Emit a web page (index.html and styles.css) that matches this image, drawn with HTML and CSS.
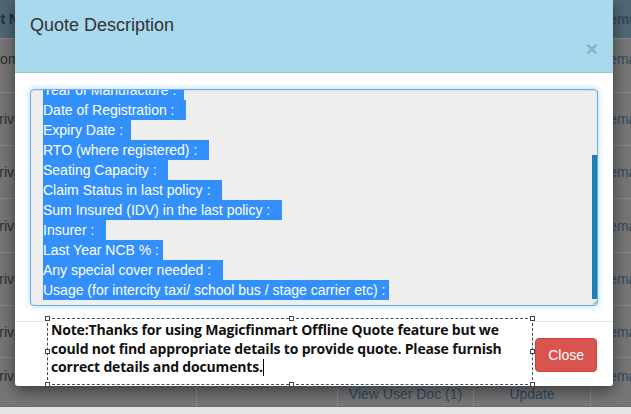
FILE: index.html
```html
<!DOCTYPE html>
<html>
<head>
<meta charset="utf-8">
<link rel="stylesheet" href="styles.css">
</head>
<body>
<div class="page">
  <div class="tbl">
    <div class="row head">
      <div class="c c1 hind">Cust Name</div><div class="c c2">Type</div><div class="c c3">Docs</div><div class="c c4">Action</div><div class="c c5">Remarks</div>
    </div>
    <div class="row r1 top">
      <div class="c c1">Comprehensive</div><div class="c c2"></div><div class="c c3"></div><div class="c c4"></div><div class="c c5">Remarks</div>
    </div>
    <div class="row r2">
      <div class="c c1">Private Car</div><div class="c c2"></div><div class="c c3"></div><div class="c c4"></div><div class="c c5">Remarks</div>
    </div>
    <div class="row r2">
      <div class="c c1">Private Car</div><div class="c c2"></div><div class="c c3"></div><div class="c c4"></div><div class="c c5">Remarks</div>
    </div>
    <div class="row r1">
      <div class="c c1">Private Car</div><div class="c c2"></div><div class="c c3"></div><div class="c c4"></div><div class="c c5">Remarks</div>
    </div>
    <div class="row r2">
      <div class="c c1">Private Car</div><div class="c c2"></div><div class="c c3"></div><div class="c c4"></div><div class="c c5">Remarks</div>
    </div>
    <div class="row r3">
      <div class="c c1">Private Car</div><div class="c c2"></div><div class="c c3"></div><div class="c c4"></div><div class="c c5">Remarks</div>
    </div>
    <div class="row last">
      <div class="c c1 lt">Private Car</div><div class="c c2"></div><div class="c c3 lb">View User Doc (1)</div><div class="c c4 lb">Update</div><div class="c c5 lt">Remarks</div>
    </div>
  </div>
  <div class="strip"></div>
</div>

<div class="modal">
  <div class="m-head">
    <div class="m-title">Quote Description</div>
    <div class="m-close-row"><span class="m-close">×</span></div>
  </div>
  <div class="m-body">
    <div class="ta">
      <div class="ta-inner">
        <div class="ln"><span>Make :  </span></div>
        <div class="ln"><span>Model :  </span></div>
        <div class="ln"><span>Year of Manufacture :  </span></div>
        <div class="ln"><span>Date of Registration :   </span></div>
        <div class="ln"><span>Expiry Date :  </span></div>
        <div class="ln"><span>RTO (where registered) :   </span></div>
        <div class="ln"><span>Seating Capacity :   </span></div>
        <div class="ln"><span>Claim Status in last policy :   </span></div>
        <div class="ln"><span>Sum Insured (IDV) in the last policy :   </span></div>
        <div class="ln"><span>Insurer :   </span></div>
        <div class="ln"><span>Last Year NCB % : </span></div>
        <div class="ln"><span>Any special cover needed :   </span></div>
        <div class="ln"><span>Usage (for intercity taxi/ school bus / stage carrier etc) : </span></div>
      </div>
      <div class="thumb"></div>
      <svg class="grip" width="5" height="5" viewBox="0 0 5 5"><path d="M4.5 1 L1 4.5 M4.5 3 L3 4.5" stroke="#777" stroke-width="0.8" fill="none"/></svg>
    </div>
  </div>
  <div class="m-foot">
    <div class="note">
      <div class="note-text">Note:Thanks for using Magicfinmart Offline Quote feature but we<br>could not find appropriate details to provide quote. Please furnish<br>correct details and documents.<span class="caret"></span></div>
      <span class="h h-tl"></span><span class="h h-tm"></span><span class="h h-tr"></span>
      <span class="h h-ml"></span><span class="h h-mr"></span>
      <span class="h h-bl"></span><span class="h h-bm"></span><span class="h h-br"></span>
    </div>
    <button class="btn-close">Close</button>
  </div>
</div>
</body>
</html>
```
FILE: styles.css
```css
html, body {
  margin: 0;
  padding: 0;
}
body {
  width: 631px;
  height: 414px;
  overflow: hidden;
  background: #767676;
  font-family: "Liberation Sans", Arial, sans-serif;
  font-size: 14px;
  position: relative;
}
.page {
  display: flex;
  flex-direction: column;
  height: 414px;
}
.tbl {
  margin-left: -18px;
  display: flex;
  flex-direction: column;
}
.row {
  display: grid;
  grid-template-columns: 215px 141px 136px 117px 200px;
  border-top: 1px solid #898989;
  color: #2e2e2e;
  align-items: center;
}
.c {
  padding: 0 8px;
  white-space: nowrap;
  overflow: hidden;
  line-height: 20px;
  height: 100%;
  display: flex;
  align-items: center;
  box-sizing: border-box;
}
.c5 { color: #33485a; }
.head {
  height: 38px;
  border-top: none;
  background: #506773;
  color: #24323b;
  font-weight: bold;
}
.hind { text-indent: -16px; }
.r1 { height: 53px; }
.r2 { height: 52px; }
.r3 { height: 51px; }
.top .c { align-items: flex-start; padding-top: 10px; }
.last { height: 48px; }
.last .c { border-right: 1px solid #898989; }
.last .lt { align-items: flex-start; padding-top: 8px; }
.last .lb {
  align-items: flex-start;
  justify-content: center;
  padding-top: 26px;
  color: #2e4a62;
}
.strip {
  flex: 1;
  background: #e6e6e6;
  border-top: 1px solid #6a6a6a;
}

/* modal */
.modal {
  position: absolute;
  left: 15px;
  top: 0;
  width: 598px;
  background: #fff;
  border-radius: 0 0 3px 3px;
  box-shadow: 0 5px 15px rgba(0,0,0,.5);
}
.m-head {
  background: #a9d9ec;
  border-bottom: 1px solid #93c6da;
  padding: 12px 15px 14px 15px;
  height: 46px;
}
.m-title {
  font-size: 18px;
  line-height: 26px;
  color: #333;
}
.m-close-row {
  display: flex;
  justify-content: flex-end;
  height: 20px;
  align-items: center;
}
.m-close {
  font-size: 21px;
  font-weight: bold;
  color: rgba(0,0,0,.2);
  line-height: 1;
  margin-right: 0;
}
.m-body {
  padding: 16px 15px 15px 15px;
}
.ta {
  position: relative;
  height: 217px;
  box-sizing: border-box;
  border: 1px solid #66afe9;
  border-radius: 4px;
  background: #eee;
  box-shadow: inset 0 1px 1px rgba(0,0,0,.075), 0 0 6px rgba(102,175,233,.5);
  overflow: hidden;
}
.ta-inner {
  height: 100%;
  box-sizing: border-box;
  padding: 6px 12px 5px 12px;
  display: flex;
  flex-direction: column;
  justify-content: flex-end;
  overflow: hidden;
}
.ln {
  display: flex;
  flex-shrink: 0;
}
.ln span {
  background: #338ffa;
  color: #fff;
  line-height: 20px;
  font-size: 14px;
  white-space: pre;
}
.thumb {
  position: absolute;
  right: 0;
  top: 65px;
  width: 5px;
  height: 144px;
  background: #1f80b2;
}
.grip {
  position: absolute;
  right: 0;
  bottom: 0;
}
.m-foot {
  border-top: 1px solid #e5e5e5;
  height: 64px;
  display: flex;
  align-items: flex-start;
  padding: 0 16px 0 32px;
}
.note {
  position: relative;
  width: 486px;
  height: 67px;
  box-sizing: border-box;
  margin-top: -4px;
  border: 1px dashed #2f5472;
  padding: 2px 3px;
  background: #fff;
}
.note-text {
  font-family: "Open Sans", sans-serif;
  font-weight: bold;
  font-size: 14px;
  line-height: 18.5px;
  color: #111;
  white-space: nowrap;
  letter-spacing: -0.17px;
}
.caret {
  display: inline-block;
  width: 1px;
  height: 17px;
  background: #000;
  vertical-align: -4px;
}
.h {
  position: absolute;
  width: 5px;
  height: 5px;
  box-sizing: border-box;
  border: 1px solid #444;
  background: #fff;
}
.h-tl { left: -3px; top: -3px; }
.h-tm { left: 241px; top: -3px; }
.h-tr { right: -3px; top: -3px; }
.h-ml { left: -3px; top: 30px; }
.h-mr { right: -3px; top: 30px; }
.h-bl { left: -3px; bottom: -3px; }
.h-bm { left: 241px; bottom: -3px; }
.h-br { right: -3px; bottom: -3px; }
.btn-close {
  margin-top: 16px;
  margin-left: auto;
  height: 34px;
  padding: 6px 12px;
  font-family: "Liberation Sans", Arial, sans-serif;
  font-size: 14px;
  line-height: 20px;
  color: #fff;
  background: #d9534f;
  border: 1px solid #d43f3a;
  border-radius: 4px;
}
```
